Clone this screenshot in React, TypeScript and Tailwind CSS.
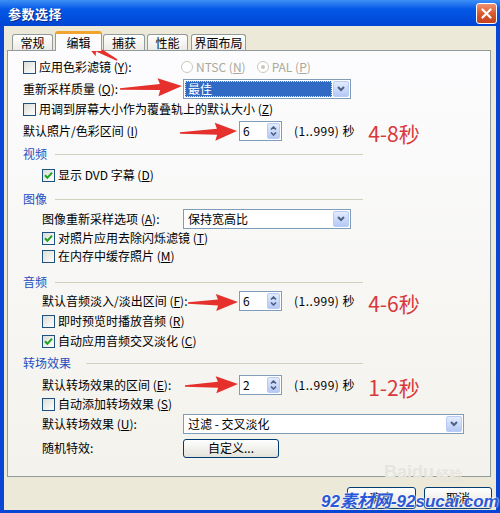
import React from 'react';

const cjk = "font-['Noto_Sans_CJK_SC','Noto_Sans',sans-serif]";

function CheckBox({ checked }: { checked?: boolean }) {
  return (
    <span className="w-[13px] h-[13px] shrink-0 border border-[#1C5180] bg-linear-to-br from-[#DCDCD7] to-white flex items-center justify-center">
      {checked && (
        <svg width="9" height="9" viewBox="0 0 9 9">
          <path d="M1 4.2 L3.4 6.8 L8 1.6" stroke="#21A121" strokeWidth="2" fill="none" />
        </svg>
      )}
    </span>
  );
}

function Radio({ dot }: { dot?: boolean }) {
  return (
    <span className="w-[12px] h-[12px] rounded-full border border-[#CAC8BB] bg-white flex items-center justify-center shrink-0">
      {dot && <span className="w-[4px] h-[4px] rounded-full bg-[#CAC8BB]" />}
    </span>
  );
}

function Hot({ text, k, colon }: { text: string; k: string; colon?: boolean }) {
  return (
    <span className="whitespace-nowrap">
      {text} (<u>{k}</u>){colon ? ':' : ''}
    </span>
  );
}

function DropBtn() {
  return (
    <span className="w-[16px] h-[16px] shrink-0 rounded-[2px] border border-[#B9CBF3] bg-linear-to-b from-[#E3ECFE] to-[#B5C9F6] flex items-center justify-center">
      <svg width="8" height="6" viewBox="0 0 8 6">
        <path d="M1 1 L4 4 L7 1" stroke="#4D6185" strokeWidth="2" fill="none" />
      </svg>
    </span>
  );
}

function Select({ value, width, focused }: { value: string; width: string; focused?: boolean }) {
  return (
    <div className={`${width} h-[20px] border border-[#7F9DB9] bg-white flex items-center p-[1px] gap-[1px]`}>
      {focused ? (
        <span className="flex-1 h-full bg-[#316AC5] border border-dotted border-[#FFE48A] text-white flex items-center pl-[2px]">
          {value}
        </span>
      ) : (
        <span className="flex-1 pl-[3px]">{value}</span>
      )}
      <DropBtn />
    </div>
  );
}

function Spin({ value }: { value: string }) {
  return (
    <div className="w-[43px] h-[20px] border border-[#7F9DB9] bg-white flex items-center pl-[3px] pr-[1px]">
      <span className="flex-1">{value}</span>
      <span className="w-[13px] h-[16px] rounded-[2px] border border-[#B9CBF3] bg-linear-to-b from-[#E3ECFE] to-[#B5C9F6] flex flex-col items-center justify-center gap-[2px]">
        <svg width="7" height="4" viewBox="0 0 7 4">
          <path d="M1 3.5 L3.5 1 L6 3.5" stroke="#4D6185" strokeWidth="1.6" fill="none" />
        </svg>
        <svg width="7" height="4" viewBox="0 0 7 4">
          <path d="M1 0.5 L3.5 3 L6 0.5" stroke="#4D6185" strokeWidth="1.6" fill="none" />
        </svg>
      </span>
    </div>
  );
}

function Range({ hint }: { hint: string }) {
  return (
    <>
      <span className="ml-[12px] tracking-[0.5px] whitespace-nowrap">(1..999) 秒</span>
      <span className="ml-[13px] mt-[5px] text-[21px] leading-none text-[#D8383A] whitespace-nowrap">{hint}</span>
    </>
  );
}

function Header({ title, mt, lineGap }: { title: string; mt: string; lineGap: string }) {
  return (
    <div className={`h-[18px] w-[340px] flex items-center ${mt}`}>
      <span className="text-[#1E4FC0] whitespace-nowrap">{title}</span>
      <span className={`flex-1 h-[1px] bg-[#D0D0BF] ${lineGap}`} />
    </div>
  );
}

function Row({ mt, indent, children }: { mt: string; indent?: boolean; children: React.ReactNode }) {
  return (
    <div className={`h-[18px] flex items-center ${mt} ${indent ? 'pl-[19px]' : ''}`}>{children}</div>
  );
}

function XPButton({ label, width, height }: { label: string; width: string; height: string }) {
  return (
    <div className={`${width} ${height} rounded-[3px] border border-[#003C74] bg-linear-to-b from-white to-[#E3E2DA] flex items-center justify-center`}>
      {label}
    </div>
  );
}

function arrowPoints(x1: number, y1: number, x2: number, y2: number, hl: number, hw: number, tw: number, nw: number) {
  const dx = x2 - x1;
  const dy = y2 - y1;
  const len = Math.hypot(dx, dy);
  const ux = dx / len;
  const uy = dy / len;
  const px = -uy;
  const py = ux;
  const bx = x2 - ux * hl;
  const by = y2 - uy * hl;
  const pts = [
    [x1 + (px * tw) / 2, y1 + (py * tw) / 2],
    [bx + (px * nw) / 2, by + (py * nw) / 2],
    [bx + (px * hw) / 2 - ux * 2, by + (py * hw) / 2 - uy * 2],
    [x2, y2],
    [bx - (px * hw) / 2 - ux * 2, by - (py * hw) / 2 - uy * 2],
    [bx - (px * nw) / 2, by - (py * nw) / 2],
    [x1 - (px * tw) / 2, y1 - (py * tw) / 2],
  ];
  return pts.map((p) => p.join(',')).join(' ');
}

const arrows = [
  { x1: 117, y1: 60, x2: 84, y2: 42, hl: 15, hw: 14, tw: 1.5, nw: 5 },
  { x1: 120, y1: 89, x2: 182, y2: 86, hl: 22, hw: 18, tw: 1.5, nw: 6 },
  { x1: 180, y1: 133, x2: 237, y2: 131, hl: 20, hw: 18, tw: 1.5, nw: 6 },
  { x1: 188, y1: 303, x2: 238, y2: 302, hl: 20, hw: 17, tw: 1.5, nw: 6 },
  { x1: 185, y1: 386, x2: 238, y2: 384, hl: 20, hw: 17, tw: 1.5, nw: 6 },
];

export default function App() {
  return (
    <div className={`relative w-[500px] h-[513px] overflow-hidden flex flex-col bg-[#0A46D6] text-[12px] leading-none text-black ${cjk}`}>
      {/* Title bar */}
      <div className="h-[26px] shrink-0 flex items-center pl-[8px] pr-[3px] bg-linear-to-b from-[#3D8FF6] via-[#0558E7] via-35% to-[#0044D3]">
        <span className="text-white font-bold text-[13px] tracking-[0.5px] [text-shadow:1px_1px_0_#0A2A8A]">参数选择</span>
        <div className="ml-auto w-[21px] h-[21px] rounded-[3px] border border-white bg-linear-to-b from-[#EE9170] via-[#DA5A2E] to-[#C3411C] flex items-center justify-center">
          <svg width="11" height="11" viewBox="0 0 11 11">
            <path d="M1.5 1.5 L9.5 9.5 M9.5 1.5 L1.5 9.5" stroke="white" strokeWidth="2.2" strokeLinecap="round" />
          </svg>
        </div>
      </div>

      {/* Dialog body */}
      <div className="flex-1 mx-[4px] mb-[3px] bg-[#ECE9D8] flex flex-col">
        {/* Tabs */}
        <div className="h-[24px] flex items-end pl-[8px]">
          <div className="w-[41px] h-[16px] border border-b-0 border-[#919B9C] rounded-t-[3px] bg-linear-to-b from-white to-[#ECEBE6] flex items-center justify-center">常规</div>
          <div className="relative z-10 ml-[2px] -mb-[1px] w-[47px] h-[20px] border border-b-0 border-[#919B9C] border-t-[3px] border-t-[#F0A530] rounded-t-[3px] bg-[#FCFCFE] flex items-center justify-center">编辑</div>
          <div className="ml-[1px] w-[42px] h-[16px] border border-b-0 border-[#919B9C] rounded-t-[3px] bg-linear-to-b from-white to-[#ECEBE6] flex items-center justify-center">捕获</div>
          <div className="ml-[2px] w-[41px] h-[16px] border border-b-0 border-[#919B9C] rounded-t-[3px] bg-linear-to-b from-white to-[#ECEBE6] flex items-center justify-center">性能</div>
          <div className="ml-[3px] w-[55px] h-[16px] border border-b-0 border-[#919B9C] rounded-t-[3px] bg-linear-to-b from-white to-[#ECEBE6] flex items-center justify-center">界面布局</div>
        </div>

        {/* Tab panel */}
        <div className="ml-[3px] w-[484px] h-[427px] border border-[#919B9C] bg-linear-to-b from-[#FCFCFE] to-[#F3F2EC] flex flex-col pl-[15px] pt-[7px]">
          <Row mt="mt-0">
            <CheckBox />
            <span className="ml-[3px] w-[142px]"><Hot text="应用色彩滤镜" k="Y" colon /></span>
            <Radio />
            <span className="ml-[3px] text-[#ACA899]">NTSC (<u>N</u>)</span>
            <span className="ml-[11px]"><Radio dot /></span>
            <span className="ml-[3px] text-[#ACA899]">PAL (<u>P</u>)</span>
          </Row>
          <Row mt="mt-[4px]">
            <span className="w-[160px]"><Hot text="重新采样质量" k="Q" colon /></span>
            <Select value="最佳" width="w-[168px]" focused />
          </Row>
          <Row mt="mt-[2px]">
            <CheckBox />
            <span className="ml-[3px]"><Hot text="用调到屏幕大小作为覆叠轨上的默认大小" k="Z" /></span>
          </Row>
          <Row mt="mt-[4px]">
            <span className="w-[216px]"><Hot text="默认照片/色彩区间" k="I" /></span>
            <Spin value="6" />
            <Range hint="4-8秒" />
          </Row>

          <Header title="视频" mt="mt-[5px]" lineGap="ml-[8px]" />
          <Row mt="mt-[3px]" indent>
            <CheckBox checked />
            <span className="ml-[3px]"><Hot text="显示 DVD 字幕" k="D" /></span>
          </Row>

          <Header title="图像" mt="mt-[6px]" lineGap="ml-[8px]" />
          <Row mt="mt-[2px]" indent>
            <span className="w-[141px]"><Hot text="图像重新采样选项" k="A" colon /></span>
            <Select value="保持宽高比" width="w-[168px]" />
          </Row>
          <Row mt="mt-[1px]" indent>
            <CheckBox checked />
            <span className="ml-[3px]"><Hot text="对照片应用去除闪烁滤镜" k="T" /></span>
          </Row>
          <Row mt="mt-0" indent>
            <CheckBox />
            <span className="ml-[3px]"><Hot text="在内存中缓存照片" k="M" /></span>
          </Row>

          <Header title="音频" mt="mt-[8px]" lineGap="ml-[8px]" />
          <Row mt="mt-[1px]" indent>
            <span className="w-[197px]"><Hot text="默认音频淡入/淡出区间" k="F" colon /></span>
            <Spin value="6" />
            <Range hint="4-6秒" />
          </Row>
          <Row mt="mt-[2px]" indent>
            <CheckBox />
            <span className="ml-[3px]"><Hot text="即时预览时播放音频" k="R" /></span>
          </Row>
          <Row mt="mt-[2px]" indent>
            <CheckBox checked />
            <span className="ml-[3px]"><Hot text="自动应用音频交叉淡化" k="C" /></span>
          </Row>

          <Header title="转场效果" mt="mt-[4px]" lineGap="ml-[15px]" />
          <Row mt="mt-[4px]" indent>
            <span className="w-[197px]"><Hot text="默认转场效果的区间" k="E" colon /></span>
            <Spin value="2" />
            <Range hint="1-2秒" />
          </Row>
          <Row mt="mt-[1px]" indent>
            <CheckBox />
            <span className="ml-[3px]"><Hot text="自动添加转场效果" k="S" /></span>
          </Row>
          <Row mt="mt-[2px]" indent>
            <span className="w-[141px]"><Hot text="默认转场效果" k="U" colon /></span>
            <Select value="过滤 - 交叉淡化" width="w-[281px]" />
          </Row>
          <Row mt="mt-[6px]" indent>
            <span className="w-[141px]">随机特效:</span>
            <XPButton label="自定义..." width="w-[96px]" height="h-[19px]" />
          </Row>
        </div>

        {/* Bottom buttons */}
        <div className="mt-[10px] flex justify-end gap-[8px] pr-[4px]">
          <XPButton label="确定" width="w-[69px]" height="h-[22px]" />
          <XPButton label="取消" width="w-[68px]" height="h-[22px]" />
        </div>
      </div>

      {/* Red annotation arrows */}
      <svg className="absolute inset-0 pointer-events-none" width="500" height="513">
        {arrows.map((a, i) => (
          <polygon key={i} points={arrowPoints(a.x1, a.y1, a.x2, a.y2, a.hl, a.hw, a.tw, a.nw)} fill="#E5302C" />
        ))}
      </svg>

      {/* Watermarks */}
      <div className="absolute left-[384px] top-[463px] flex items-end text-[#E6E5DE] font-bold text-[18px] font-['Liberation_Sans',sans-serif] pointer-events-none">
        <span>Baidu</span>
        <span className={`ml-[2px] text-[13px] ${cjk}`}>经验</span>
      </div>
      <div className="absolute left-[321px] top-[493px] text-[17px] leading-none font-bold italic text-[#2A58D6] font-['Liberation_Sans','Noto_Sans_CJK_SC',sans-serif] [text-shadow:0_0_2px_#fff,0_0_2px_#fff] pointer-events-none whitespace-nowrap">
        92素材网-92sucai.com
      </div>
    </div>
  );
}
